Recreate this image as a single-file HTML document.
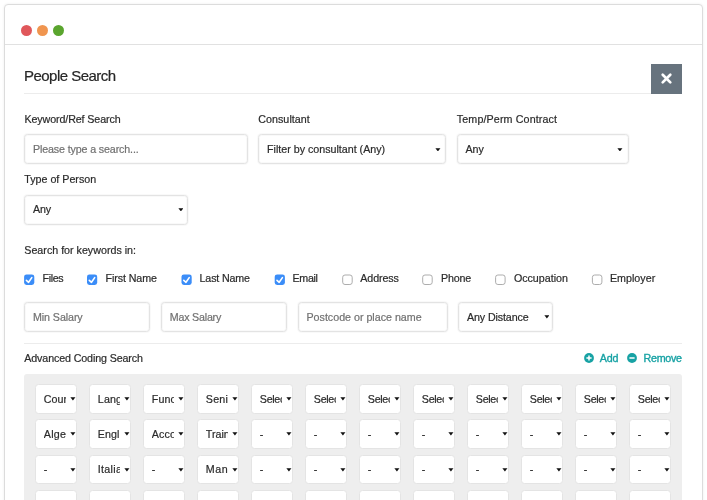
<!DOCTYPE html>
<html lang="en"><head><meta charset="utf-8"><title>People Search</title>
<style>
html,body{margin:0;padding:0;background:#fff;}
body{width:707px;height:500px;overflow:hidden;position:relative;font-family:"Liberation Sans",Arial,sans-serif;color:#333;font-size:10.7px;}
.root{position:absolute;left:0;top:0;width:707px;height:500px;overflow:hidden;will-change:transform;}
.win{position:absolute;left:4px;top:4px;width:697px;height:520px;border:1px solid #dcdcdc;border-radius:4px;background:#fff;box-shadow:0 0 3px rgba(0,0,0,.07);}
.bar{position:absolute;left:5px;top:44px;width:697px;height:1px;background:#e1e1e1;}
.dot{position:absolute;top:25px;width:11px;height:11px;border-radius:50%;}
.title{position:absolute;left:24px;top:65.7px;font-size:15px;letter-spacing:-0.531px;line-height:20px;color:#262626;-webkit-text-stroke:0.2px currentColor;white-space:nowrap;}
.hr{position:absolute;left:24px;width:658px;height:1px;background:#ececec;}
.close{position:absolute;left:651px;top:64px;width:31px;height:30px;background:#67737e;}
.lbl{position:absolute;white-space:nowrap;line-height:14px;font-size:10.7px;color:#2b2b2b;-webkit-text-stroke:0.2px currentColor;margin-top:-0.3px;}
.inp,.sel{position:absolute;box-sizing:border-box;height:30px;border:1px solid #e3e3e3;border-radius:3.5px;background:#fff;box-shadow:0 0 0 1px rgba(0,0,0,.025),inset 0 0 0 1px rgba(0,0,0,.025);font-size:10.7px;line-height:28px;padding-left:8px;-webkit-text-stroke:0.2px currentColor;white-space:nowrap;overflow:hidden;}
.inp{color:#717171;}
.sel{color:#2b2b2b;}
.ar{position:absolute;right:4.6px;top:12.3px;width:5.8px;height:3.6px;}
.g{width:42px;height:29.3px;padding-left:7.8px;border-color:#e4e4e4;box-shadow:none;}
.g .t{display:block;width:22.2px;overflow:hidden;white-space:nowrap;}
.g .ar{right:0.3px;top:12.2px}
.panel{position:absolute;left:24px;top:374px;width:658px;height:140px;background:#eeeeee;border-radius:3px;}
.cbs{position:absolute;top:272px;}
.teal{color:#17a2a4;-webkit-text-stroke:0.35px #17a2a4;}
</style></head><body><div class="root">
<div class="win"></div>
<div class="bar"></div>
<span class="dot" style="left:20.5px;background:#e0575b"></span>
<span class="dot" style="left:36.5px;background:#f0954f"></span>
<span class="dot" style="left:52.5px;background:#5aa52e"></span>
<div class="title">People Search</div>
<div class="close"><svg width="31" height="30" viewBox="0 0 31 30"><path d="M11.7 10.8 L19.3 18.4 M19.3 10.8 L11.7 18.4" stroke="#fff" stroke-width="2.7" stroke-linecap="round" fill="none"/></svg></div>
<div class="hr" style="top:93px;width:627px"></div>

<span class="lbl" style="left:24.5px;top:112.3px;letter-spacing:-0.112px">Keyword/Ref Search</span>
<span class="lbl" style="left:258.2px;top:112.3px;letter-spacing:0.059px">Consultant</span>
<span class="lbl" style="left:456.8px;top:112.3px;letter-spacing:0.133px">Temp/Perm Contract</span>
<div class="inp" style="left:24px;top:134px;width:223.6px;letter-spacing:-0.136px">Please type a search...</div>
<div class="sel" style="left:258px;top:134px;width:188.3px;letter-spacing:-0.004px">Filter by consultant (Any)<svg class="ar" style="right:4.5px;top:12.7px" viewBox="0 0 6 4"><path d="M0.2 0.3H5.8L3 3.8Z" fill="#111"/></svg></div>
<div class="sel" style="left:456.6px;top:134px;width:172.4px;letter-spacing:-0.141px">Any<svg class="ar" style="right:5.0px;top:12.7px" viewBox="0 0 6 4"><path d="M0.2 0.3H5.8L3 3.8Z" fill="#111"/></svg></div>

<span class="lbl" style="left:24.3px;top:171.8px;letter-spacing:-0.006px">Type of Person</span>
<div class="sel" style="left:24px;top:195px;width:164px;letter-spacing:-0.141px;line-height:27px">Any<svg class="ar" style="right:3.7px;top:11.8px" viewBox="0 0 6 4"><path d="M0.2 0.3H5.8L3 3.8Z" fill="#111"/></svg></div>

<span class="lbl" style="left:24.3px;top:243.2px;letter-spacing:0.001px">Search for keywords in:</span>
<svg class="cbs" style="left:22px" width="16" height="16" viewBox="0 0 16 16"><rect x="2.10" y="2.4" width="10.2" height="10.5" rx="2.4" fill="#3b8df8"/><path d="M4.40 8.3 L6.60 10.3 L9.80 5.6" fill="none" stroke="#fff" stroke-width="1.6" stroke-linecap="round" stroke-linejoin="round"/></svg>
<span class="lbl" style="left:42.6px;top:271.5px;letter-spacing:-0.396px">Files</span>
<svg class="cbs" style="left:85px" width="16" height="16" viewBox="0 0 16 16"><rect x="2.00" y="2.4" width="10.2" height="10.5" rx="2.4" fill="#3b8df8"/><path d="M4.30 8.3 L6.50 10.3 L9.70 5.6" fill="none" stroke="#fff" stroke-width="1.6" stroke-linecap="round" stroke-linejoin="round"/></svg>
<span class="lbl" style="left:105.6px;top:271.5px;letter-spacing:-0.107px">First Name</span>
<svg class="cbs" style="left:179px" width="16" height="16" viewBox="0 0 16 16"><rect x="2.50" y="2.4" width="10.2" height="10.5" rx="2.4" fill="#3b8df8"/><path d="M4.80 8.3 L7.00 10.3 L10.20 5.6" fill="none" stroke="#fff" stroke-width="1.6" stroke-linecap="round" stroke-linejoin="round"/></svg>
<span class="lbl" style="left:199.6px;top:271.5px;letter-spacing:-0.176px">Last Name</span>
<svg class="cbs" style="left:272px" width="16" height="16" viewBox="0 0 16 16"><rect x="2.70" y="2.4" width="10.2" height="10.5" rx="2.4" fill="#3b8df8"/><path d="M5.00 8.3 L7.20 10.3 L10.40 5.6" fill="none" stroke="#fff" stroke-width="1.6" stroke-linecap="round" stroke-linejoin="round"/></svg>
<span class="lbl" style="left:292.5px;top:271.5px;letter-spacing:-0.327px">Email</span>
<svg class="cbs" style="left:340px" width="16" height="16" viewBox="0 0 16 16"><rect x="2.70" y="3.0" width="9.5" height="9.5" rx="2.3" fill="#fff" stroke="#adadad" stroke-width="1"/></svg>
<span class="lbl" style="left:360.3px;top:271.5px;letter-spacing:-0.117px">Address</span>
<svg class="cbs" style="left:420px" width="16" height="16" viewBox="0 0 16 16"><rect x="2.70" y="3.0" width="9.5" height="9.5" rx="2.3" fill="#fff" stroke="#adadad" stroke-width="1"/></svg>
<span class="lbl" style="left:441px;top:271.5px;letter-spacing:-0.161px">Phone</span>
<svg class="cbs" style="left:493px" width="16" height="16" viewBox="0 0 16 16"><rect x="2.60" y="3.0" width="9.5" height="9.5" rx="2.3" fill="#fff" stroke="#adadad" stroke-width="1"/></svg>
<span class="lbl" style="left:513.9px;top:271.5px;letter-spacing:-0.008px">Occupation</span>
<svg class="cbs" style="left:589px" width="16" height="16" viewBox="0 0 16 16"><rect x="3.40" y="3.0" width="9.5" height="9.5" rx="2.3" fill="#fff" stroke="#adadad" stroke-width="1"/></svg>
<span class="lbl" style="left:609.9px;top:271.5px;letter-spacing:0.032px">Employer</span>

<div class="inp" style="left:24px;top:302px;width:126.2px;letter-spacing:-0.088px">Min Salary</div>
<div class="inp" style="left:160.8px;top:302px;width:126.2px;letter-spacing:-0.217px">Max Salary</div>
<div class="inp" style="left:297.5px;top:302px;width:150.3px;letter-spacing:-0.008px">Postcode or place name</div>
<div class="sel" style="left:458px;top:302px;width:95px;letter-spacing:-0.122px">Any Distance<svg class="ar" style="right:2.6px;top:12.4px" viewBox="0 0 6 4"><path d="M0.2 0.3H5.8L3 3.8Z" fill="#111"/></svg></div>

<div class="hr" style="top:343px"></div>
<span class="lbl" style="left:24.3px;top:351.3px;letter-spacing:-0.124px">Advanced Coding Search</span>
<svg style="position:absolute;left:584px;top:353px" width="10" height="10" viewBox="0 0 10 10"><circle cx="5" cy="5" r="4.9" fill="#17a2a4"/><path d="M2.4 5H7.6M5 2.4V7.6" stroke="#fff" stroke-width="1.5"/></svg>
<span class="lbl teal" style="left:599.7px;top:351.2px;letter-spacing:-0.077px">Add</span>
<svg style="position:absolute;left:627px;top:353px" width="10" height="10" viewBox="0 0 10 10"><circle cx="5" cy="5" r="4.9" fill="#17a2a4"/><path d="M2.4 5H7.6" stroke="#fff" stroke-width="1.5"/></svg>
<span class="lbl teal" style="left:643.6px;top:351.2px;letter-spacing:-0.299px">Remove</span>

<div class="panel"></div>
<div class="sel g" style="left:35.0px;top:384px;height:30px;line-height:28.8px"><span class="t">Country</span><svg class="ar" viewBox="0 0 6 4"><path d="M0.2 0.3H5.8L3 3.8Z" fill="#111"/></svg></div>
<div class="sel g" style="left:89.0px;top:384px;height:30px;line-height:28.8px"><span class="t" style="letter-spacing:0.15px">Language</span><svg class="ar" viewBox="0 0 6 4"><path d="M0.2 0.3H5.8L3 3.8Z" fill="#111"/></svg></div>
<div class="sel g" style="left:143.0px;top:384px;height:30px;line-height:28.8px"><span class="t" style="letter-spacing:0.1px">Function</span><svg class="ar" viewBox="0 0 6 4"><path d="M0.2 0.3H5.8L3 3.8Z" fill="#111"/></svg></div>
<div class="sel g" style="left:197.0px;top:384px;height:30px;line-height:28.8px"><span class="t" style="letter-spacing:0.25px">Seniority</span><svg class="ar" viewBox="0 0 6 4"><path d="M0.2 0.3H5.8L3 3.8Z" fill="#111"/></svg></div>
<div class="sel g" style="left:251.0px;top:384px;height:30px;line-height:28.8px"><span class="t" style="letter-spacing:-0.3px">Select</span><svg class="ar" viewBox="0 0 6 4"><path d="M0.2 0.3H5.8L3 3.8Z" fill="#111"/></svg></div>
<div class="sel g" style="left:305.0px;top:384px;height:30px;line-height:28.8px"><span class="t" style="letter-spacing:-0.3px">Select</span><svg class="ar" viewBox="0 0 6 4"><path d="M0.2 0.3H5.8L3 3.8Z" fill="#111"/></svg></div>
<div class="sel g" style="left:359.0px;top:384px;height:30px;line-height:28.8px"><span class="t" style="letter-spacing:-0.3px">Select</span><svg class="ar" viewBox="0 0 6 4"><path d="M0.2 0.3H5.8L3 3.8Z" fill="#111"/></svg></div>
<div class="sel g" style="left:413.0px;top:384px;height:30px;line-height:28.8px"><span class="t" style="letter-spacing:-0.3px">Select</span><svg class="ar" viewBox="0 0 6 4"><path d="M0.2 0.3H5.8L3 3.8Z" fill="#111"/></svg></div>
<div class="sel g" style="left:467.0px;top:384px;height:30px;line-height:28.8px"><span class="t" style="letter-spacing:-0.3px">Select</span><svg class="ar" viewBox="0 0 6 4"><path d="M0.2 0.3H5.8L3 3.8Z" fill="#111"/></svg></div>
<div class="sel g" style="left:521.0px;top:384px;height:30px;line-height:28.8px"><span class="t" style="letter-spacing:-0.3px">Select</span><svg class="ar" viewBox="0 0 6 4"><path d="M0.2 0.3H5.8L3 3.8Z" fill="#111"/></svg></div>
<div class="sel g" style="left:575.0px;top:384px;height:30px;line-height:28.8px"><span class="t" style="letter-spacing:-0.3px">Select</span><svg class="ar" viewBox="0 0 6 4"><path d="M0.2 0.3H5.8L3 3.8Z" fill="#111"/></svg></div>
<div class="sel g" style="left:629.0px;top:384px;height:30px;line-height:28.8px"><span class="t" style="letter-spacing:-0.3px">Select</span><svg class="ar" viewBox="0 0 6 4"><path d="M0.2 0.3H5.8L3 3.8Z" fill="#111"/></svg></div>
<div class="sel g" style="left:35.0px;top:419px;height:30px;line-height:28.8px"><span class="t" style="letter-spacing:0.25px">Algeria</span><svg class="ar" viewBox="0 0 6 4"><path d="M0.2 0.3H5.8L3 3.8Z" fill="#111"/></svg></div>
<div class="sel g" style="left:89.0px;top:419px;height:30px;line-height:28.8px"><span class="t" style="letter-spacing:0.1px">English</span><svg class="ar" viewBox="0 0 6 4"><path d="M0.2 0.3H5.8L3 3.8Z" fill="#111"/></svg></div>
<div class="sel g" style="left:143.0px;top:419px;height:30px;line-height:28.8px"><span class="t" style="letter-spacing:0.1px">Accounting</span><svg class="ar" viewBox="0 0 6 4"><path d="M0.2 0.3H5.8L3 3.8Z" fill="#111"/></svg></div>
<div class="sel g" style="left:197.0px;top:419px;height:30px;line-height:28.8px"><span class="t" style="letter-spacing:0.0px">Trainee</span><svg class="ar" viewBox="0 0 6 4"><path d="M0.2 0.3H5.8L3 3.8Z" fill="#111"/></svg></div>
<div class="sel g" style="left:251.0px;top:419px;height:30px;line-height:28.8px"><span class="t">-</span><svg class="ar" viewBox="0 0 6 4"><path d="M0.2 0.3H5.8L3 3.8Z" fill="#111"/></svg></div>
<div class="sel g" style="left:305.0px;top:419px;height:30px;line-height:28.8px"><span class="t">-</span><svg class="ar" viewBox="0 0 6 4"><path d="M0.2 0.3H5.8L3 3.8Z" fill="#111"/></svg></div>
<div class="sel g" style="left:359.0px;top:419px;height:30px;line-height:28.8px"><span class="t">-</span><svg class="ar" viewBox="0 0 6 4"><path d="M0.2 0.3H5.8L3 3.8Z" fill="#111"/></svg></div>
<div class="sel g" style="left:413.0px;top:419px;height:30px;line-height:28.8px"><span class="t">-</span><svg class="ar" viewBox="0 0 6 4"><path d="M0.2 0.3H5.8L3 3.8Z" fill="#111"/></svg></div>
<div class="sel g" style="left:467.0px;top:419px;height:30px;line-height:28.8px"><span class="t">-</span><svg class="ar" viewBox="0 0 6 4"><path d="M0.2 0.3H5.8L3 3.8Z" fill="#111"/></svg></div>
<div class="sel g" style="left:521.0px;top:419px;height:30px;line-height:28.8px"><span class="t">-</span><svg class="ar" viewBox="0 0 6 4"><path d="M0.2 0.3H5.8L3 3.8Z" fill="#111"/></svg></div>
<div class="sel g" style="left:575.0px;top:419px;height:30px;line-height:28.8px"><span class="t">-</span><svg class="ar" viewBox="0 0 6 4"><path d="M0.2 0.3H5.8L3 3.8Z" fill="#111"/></svg></div>
<div class="sel g" style="left:629.0px;top:419px;height:30px;line-height:28.8px"><span class="t">-</span><svg class="ar" viewBox="0 0 6 4"><path d="M0.2 0.3H5.8L3 3.8Z" fill="#111"/></svg></div>
<div class="sel g" style="left:35.0px;top:455px;height:29px;line-height:27.8px"><span class="t">-</span><svg class="ar" viewBox="0 0 6 4"><path d="M0.2 0.3H5.8L3 3.8Z" fill="#111"/></svg></div>
<div class="sel g" style="left:89.0px;top:455px;height:29px;line-height:27.8px"><span class="t" style="letter-spacing:0.3px">Italian</span><svg class="ar" viewBox="0 0 6 4"><path d="M0.2 0.3H5.8L3 3.8Z" fill="#111"/></svg></div>
<div class="sel g" style="left:143.0px;top:455px;height:29px;line-height:27.8px"><span class="t">-</span><svg class="ar" viewBox="0 0 6 4"><path d="M0.2 0.3H5.8L3 3.8Z" fill="#111"/></svg></div>
<div class="sel g" style="left:197.0px;top:455px;height:29px;line-height:27.8px"><span class="t" style="letter-spacing:0.5px">Manager</span><svg class="ar" viewBox="0 0 6 4"><path d="M0.2 0.3H5.8L3 3.8Z" fill="#111"/></svg></div>
<div class="sel g" style="left:251.0px;top:455px;height:29px;line-height:27.8px"><span class="t">-</span><svg class="ar" viewBox="0 0 6 4"><path d="M0.2 0.3H5.8L3 3.8Z" fill="#111"/></svg></div>
<div class="sel g" style="left:305.0px;top:455px;height:29px;line-height:27.8px"><span class="t">-</span><svg class="ar" viewBox="0 0 6 4"><path d="M0.2 0.3H5.8L3 3.8Z" fill="#111"/></svg></div>
<div class="sel g" style="left:359.0px;top:455px;height:29px;line-height:27.8px"><span class="t">-</span><svg class="ar" viewBox="0 0 6 4"><path d="M0.2 0.3H5.8L3 3.8Z" fill="#111"/></svg></div>
<div class="sel g" style="left:413.0px;top:455px;height:29px;line-height:27.8px"><span class="t">-</span><svg class="ar" viewBox="0 0 6 4"><path d="M0.2 0.3H5.8L3 3.8Z" fill="#111"/></svg></div>
<div class="sel g" style="left:467.0px;top:455px;height:29px;line-height:27.8px"><span class="t">-</span><svg class="ar" viewBox="0 0 6 4"><path d="M0.2 0.3H5.8L3 3.8Z" fill="#111"/></svg></div>
<div class="sel g" style="left:521.0px;top:455px;height:29px;line-height:27.8px"><span class="t">-</span><svg class="ar" viewBox="0 0 6 4"><path d="M0.2 0.3H5.8L3 3.8Z" fill="#111"/></svg></div>
<div class="sel g" style="left:575.0px;top:455px;height:29px;line-height:27.8px"><span class="t">-</span><svg class="ar" viewBox="0 0 6 4"><path d="M0.2 0.3H5.8L3 3.8Z" fill="#111"/></svg></div>
<div class="sel g" style="left:629.0px;top:455px;height:29px;line-height:27.8px"><span class="t">-</span><svg class="ar" viewBox="0 0 6 4"><path d="M0.2 0.3H5.8L3 3.8Z" fill="#111"/></svg></div>
<div class="sel g" style="left:35.0px;top:490px;height:30px;line-height:28.8px"><span class="t"></span><svg class="ar" viewBox="0 0 6 4"><path d="M0.2 0.3H5.8L3 3.8Z" fill="#111"/></svg></div>
<div class="sel g" style="left:89.0px;top:490px;height:30px;line-height:28.8px"><span class="t"></span><svg class="ar" viewBox="0 0 6 4"><path d="M0.2 0.3H5.8L3 3.8Z" fill="#111"/></svg></div>
<div class="sel g" style="left:143.0px;top:490px;height:30px;line-height:28.8px"><span class="t"></span><svg class="ar" viewBox="0 0 6 4"><path d="M0.2 0.3H5.8L3 3.8Z" fill="#111"/></svg></div>
<div class="sel g" style="left:197.0px;top:490px;height:30px;line-height:28.8px"><span class="t"></span><svg class="ar" viewBox="0 0 6 4"><path d="M0.2 0.3H5.8L3 3.8Z" fill="#111"/></svg></div>
<div class="sel g" style="left:251.0px;top:490px;height:30px;line-height:28.8px"><span class="t"></span><svg class="ar" viewBox="0 0 6 4"><path d="M0.2 0.3H5.8L3 3.8Z" fill="#111"/></svg></div>
<div class="sel g" style="left:305.0px;top:490px;height:30px;line-height:28.8px"><span class="t"></span><svg class="ar" viewBox="0 0 6 4"><path d="M0.2 0.3H5.8L3 3.8Z" fill="#111"/></svg></div>
<div class="sel g" style="left:359.0px;top:490px;height:30px;line-height:28.8px"><span class="t"></span><svg class="ar" viewBox="0 0 6 4"><path d="M0.2 0.3H5.8L3 3.8Z" fill="#111"/></svg></div>
<div class="sel g" style="left:413.0px;top:490px;height:30px;line-height:28.8px"><span class="t"></span><svg class="ar" viewBox="0 0 6 4"><path d="M0.2 0.3H5.8L3 3.8Z" fill="#111"/></svg></div>
<div class="sel g" style="left:467.0px;top:490px;height:30px;line-height:28.8px"><span class="t"></span><svg class="ar" viewBox="0 0 6 4"><path d="M0.2 0.3H5.8L3 3.8Z" fill="#111"/></svg></div>
<div class="sel g" style="left:521.0px;top:490px;height:30px;line-height:28.8px"><span class="t"></span><svg class="ar" viewBox="0 0 6 4"><path d="M0.2 0.3H5.8L3 3.8Z" fill="#111"/></svg></div>
<div class="sel g" style="left:575.0px;top:490px;height:30px;line-height:28.8px"><span class="t"></span><svg class="ar" viewBox="0 0 6 4"><path d="M0.2 0.3H5.8L3 3.8Z" fill="#111"/></svg></div>
<div class="sel g" style="left:629.0px;top:490px;height:30px;line-height:28.8px"><span class="t"></span><svg class="ar" viewBox="0 0 6 4"><path d="M0.2 0.3H5.8L3 3.8Z" fill="#111"/></svg></div>
</div></body></html>
